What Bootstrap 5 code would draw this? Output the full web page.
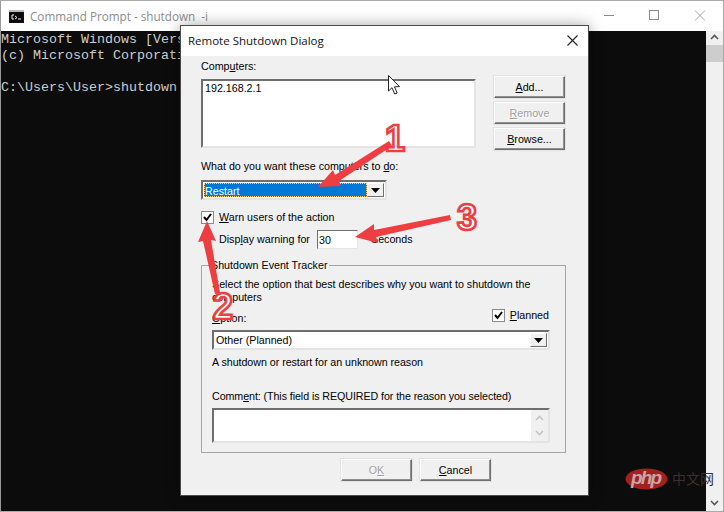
<!DOCTYPE html>
<html lang="en">
<head>
<meta charset="utf-8">
<title>Remote Shutdown Dialog</title>
<link href="https://cdn.jsdelivr.net/npm/bootstrap@5.3.0/dist/css/bootstrap.min.css" rel="stylesheet">
<style>
html,body{height:100%;margin:0;overflow:hidden;background:#0c0c0c}
.shell{width:724px;height:512px;border:1px solid #aaa;border-left-color:#999;position:relative;overflow:hidden}
.shell-bar{height:30px;background:#fff;padding-left:8px;font:11.7px "Open Sans",sans-serif;color:#8c8c8c}
.shell-title{margin-left:6px;white-space:pre}
.shell-ctrls{width:119px;height:30px;margin-left:auto}
.shell-main{height:480px}
.term{width:705px;background:#0c0c0c;color:#ccc;font:13.33px/16px "Liberation Mono",monospace;white-space:pre;padding-top:1px}
.term-sb{width:17px;background:#f0f0f0;padding:3px 0 5px}
.term-thumb{height:17px;margin:5px 1px auto 1px;background:#cdcdcd}
.dlg{position:absolute;left:179px;top:24px;width:409px;height:471px;border:1px solid #4a4a4a;box-shadow:0 0 14px rgba(0,0,0,.35);background:#f0f0f0;font:10.7px/13px "Liberation Sans",Arial,sans-serif;color:#000}
.dlg-head{height:30px;background:#fff;padding:0 10px 2px 7px;font:11.5px "Open Sans",sans-serif;color:#111}
.dlg-body{padding:4px 23px 0 20px}
.col-list{width:275px}
.col-btns{width:71px;padding-top:16px;gap:4px}
.sunken{background:#fff;border:2px solid;border-color:#6e6e6e #e4e4e4 #e4e4e4 #6e6e6e}
.lst{height:69px;margin-top:6px;padding:1px 2px}
.win-btn.btn{width:71px;height:22px;padding:0;border-radius:0;font:10.7px/13px "Liberation Sans",Arial,sans-serif;color:#000;background:#f0f0f0;border:1px solid;border-color:#fff #6f6f6f #6f6f6f #fff;box-shadow:inset -1px -1px 0 #8f8f8f,0 0 0 1px #e3e3e3}
.win-btn.btn:disabled{opacity:1;color:#a0a0a0;text-shadow:1px 1px 0 #fff;background:#f0f0f0;border-color:#fff #6f6f6f #6f6f6f #fff}
.combo{height:20px;padding:1px}
.combo-wide{width:186px;margin-top:7px}
.combo-val{flex:1;line-height:14px}
.combo-sel{background:#0078d7;color:#fff;border:1px dotted #ffd27a}
.combo-plain{padding-left:1px}
.drop{width:17px;background:#f0f0f0;border:1px solid;border-color:#fff #6f6f6f #6f6f6f #fff}
.tick{width:13px;height:13px;flex:none}
.warn-row{margin-top:11px;height:13px;gap:5px}
.disp-row{margin-top:6px;height:19px;padding-left:18px}
.disp-lbl{width:98px}
.num.form-control{width:41px;height:19px;min-height:0;padding:0 1px;border-radius:0;font:inherit;color:#000;background:#fff;border:1px solid;border-color:#6e6e6e #e4e4e4 #e4e4e4 #6e6e6e;box-shadow:none}
.sec{margin-left:13px}
.grp{margin-top:10px;width:365px;border:1px solid #a5a5a5;padding:0 15px 10px 10px;height:194px}
.grp legend{float:none;width:auto;margin:0 0 0 -3px;padding:0 2px;font:inherit;color:inherit}
.grp-intro{margin-top:6px;width:336px}
.what-lbl{margin-top:10px}
.opt-row{margin-top:5px;height:16px;padding-right:1px}
.opt-lbl{align-self:flex-end}
.plan-row{gap:5px;align-self:flex-start}
.combo-full{margin-top:5px;height:20px}
.mt-reason{margin-top:6px;letter-spacing:-.04px}
.mt-comment{margin-top:21px;letter-spacing:-.08px}
.memo{height:35px;margin-top:5px}
.memo-sb{width:17px;margin-left:auto;background:#f0f0f0;padding:5px 0}
.foot{margin-top:6px;padding-left:140px;gap:8px}
.anno{position:absolute;left:-1px;top:-1px;width:724px;height:512px;pointer-events:none}
.anno-num{font:bold 36px "Liberation Sans",Arial,sans-serif;fill:#fff;stroke:#ee3e42;stroke-width:2.6px}
.wm-txt{font:italic bold 19px "Liberation Sans",Arial,sans-serif;fill:#c9a4a4}
.wm-cjk{font:14px "Noto Sans CJK SC",sans-serif;fill:#3a2f2f}
</style>
</head>
<body>
<div class="shell">
  <div class="shell-bar d-flex align-items-center">
    <svg width="15" height="13" viewBox="0 0 15 13" aria-hidden="true"><rect width="15" height="13" fill="#111"/><rect y="0" width="15" height="2" fill="#bbb"/><rect x="1" y="2" width="13" height="10" fill="#0b0b0b"/><path d="M3 5h2M3 9h2M3 5v4M6 6l2 1.500-2 1.500M9 9h3" stroke="#eee" stroke-width="1" fill="none"/></svg>
    <span class="shell-title">Command Prompt - shutdown  -i</span>
    <svg class="shell-ctrls" viewBox="0 0 119 30" aria-hidden="true" fill="none" stroke="#8a8a8a"><path d="M0 14.500h10"/><rect x="45.500" y="9.500" width="9" height="9"/><path d="M91 9.500l10 10M101 9.500l-10 10" stroke="#a9a9a9"/></svg>
  </div>
  <div class="shell-main d-flex">
    <div class="term">Microsoft Windows [Version 10.0.18363.657]
(c) Microsoft Corporation. All rights reserved.

C:\Users\User&gt;shutdown -i</div>
    <div class="term-sb d-flex flex-column align-items-center">
      <svg width="9" height="6" viewBox="0 0 9 6" aria-hidden="true"><path d="M1 5l3.500-3.500L8 5" fill="none" stroke="#555" stroke-width="1.600"/></svg>
      <div class="term-thumb w-100"></div>
      <svg class="mt-auto" width="9" height="6" viewBox="0 0 9 6" aria-hidden="true"><path d="M1 1l3.500 3.500L8 1" fill="none" stroke="#555" stroke-width="1.600"/></svg>
    </div>
  </div>

  <div class="dlg">
    <div class="dlg-head d-flex align-items-center justify-content-between">
      <span>Remote Shutdown Dialog</span>
      <svg width="11" height="11" viewBox="0 0 11 11" aria-hidden="true"><path d="M.5.5l10 10M10.500.5l-10 10" stroke="#222" stroke-width="1.100" fill="none"/></svg>
    </div>
    <div class="dlg-body">
      <div class="d-flex justify-content-between">
        <div class="col-list">
          <div>Comp<u>u</u>ters:</div>
          <div class="sunken lst">192.168.2.1</div>
        </div>
        <div class="col-btns d-flex flex-column">
          <button type="button" class="btn win-btn"><u>A</u>dd...</button>
          <button type="button" class="btn win-btn" disabled><u>R</u>emove</button>
          <button type="button" class="btn win-btn"><u>B</u>rowse...</button>
        </div>
      </div>
      <div class="what-lbl">What do you want these computers to <u>d</u>o:</div>
      <div class="sunken combo combo-wide d-flex">
        <div class="combo-val combo-sel">Restart</div>
        <div class="drop d-flex align-items-center justify-content-center"><svg width="9" height="5" viewBox="0 0 9 5" aria-hidden="true"><path d="M0 0h9L4.500 5z" fill="#000"/></svg></div>
      </div>
      <div class="warn-row d-flex align-items-center">
        <svg class="tick" viewBox="0 0 13 13" aria-hidden="true"><rect x=".5" y=".5" width="12" height="12" fill="#fff" stroke="#8a8a8a"/><path d="M3 6l2.500 3L10 3" fill="none" stroke="#000" stroke-width="2"/></svg>
        <span><u>W</u>arn users of the action</span>
      </div>
      <div class="disp-row d-flex align-items-center">
        <span class="disp-lbl">Disp<u>l</u>ay warning for</span>
        <input class="form-control num" type="text" value="30" aria-label="Seconds">
        <span class="sec">Seconds</span>
      </div>
      <fieldset class="grp">
        <legend>Shutdown Event Tracker</legend>
        <div class="grp-intro">Select the option that best describes why you want to shutdown the computers</div>
        <div class="opt-row d-flex justify-content-between">
          <span class="opt-lbl"><u>O</u>ption:</span>
          <span class="plan-row d-flex align-items-center">
            <svg class="tick" viewBox="0 0 13 13" aria-hidden="true"><rect x=".5" y=".5" width="12" height="12" fill="#fff" stroke="#8a8a8a"/><path d="M3 6l2.500 3L10 3" fill="none" stroke="#000" stroke-width="2"/></svg>
            <span><u>P</u>lanned</span>
          </span>
        </div>
        <div class="sunken combo combo-full d-flex">
          <div class="combo-val combo-plain">Other (Planned)</div>
          <div class="drop d-flex align-items-center justify-content-center"><svg width="9" height="5" viewBox="0 0 9 5" aria-hidden="true"><path d="M0 0h9L4.500 5z" fill="#000"/></svg></div>
        </div>
        <div class="mt-reason">A shutdown or restart for an unknown reason</div>
        <div class="mt-comment">Comm<u>e</u>nt: (This field is REQUIRED for the reason you selected)</div>
        <div class="sunken memo d-flex">
          <div class="memo-sb d-flex flex-column align-items-center justify-content-between">
            <svg width="9" height="6" viewBox="0 0 9 6" aria-hidden="true"><path d="M1 5l3.500-3.500L8 5" fill="none" stroke="#c4c4c4" stroke-width="1.600"/></svg>
            <svg width="9" height="6" viewBox="0 0 9 6" aria-hidden="true"><path d="M1 1l3.500 3.500L8 1" fill="none" stroke="#c4c4c4" stroke-width="1.600"/></svg>
          </div>
        </div>
      </fieldset>
      <div class="foot d-flex">
        <button type="button" class="btn win-btn" disabled>O<u>K</u></button>
        <button type="button" class="btn win-btn"><u>C</u>ancel</button>
      </div>
    </div>
  </div>

  <svg class="anno" viewBox="0 0 724 512" aria-hidden="true">
    <path d="M388.500 75.500v15.500l3.500-3.300 2.700 6.300 2.500-1-2.700-6.200 5-.2z" fill="#fff" stroke="#222" stroke-width="1"/>
    <g fill="#ee3e42">
      <path d="M318 187l15-17 2 5 54-34 3 5-53 35 2 5z"/>
      <path d="M207 221l9 20-5-1 9 53-5 1-12-53-5 1z"/>
      <path d="M355 237l19-13 0 6 76-15 1 5-75 17 2 6z"/>
    </g>
    <text class="anno-num" x="385" y="151">1</text>
    <text class="anno-num" x="213" y="319">2</text>
    <text class="anno-num" x="457" y="230">3</text>
    <ellipse cx="646.500" cy="479" rx="21" ry="10.500" fill="#a32020"/>
    <text class="wm-txt" x="631" y="484" textLength="31">php</text>
    <text class="wm-cjk" x="672" y="484" textLength="42">中文网</text>
  </svg>
</div>
<script src="https://cdn.jsdelivr.net/npm/bootstrap@5.3.0/dist/js/bootstrap.bundle.min.js"></script>
</body>
</html>
